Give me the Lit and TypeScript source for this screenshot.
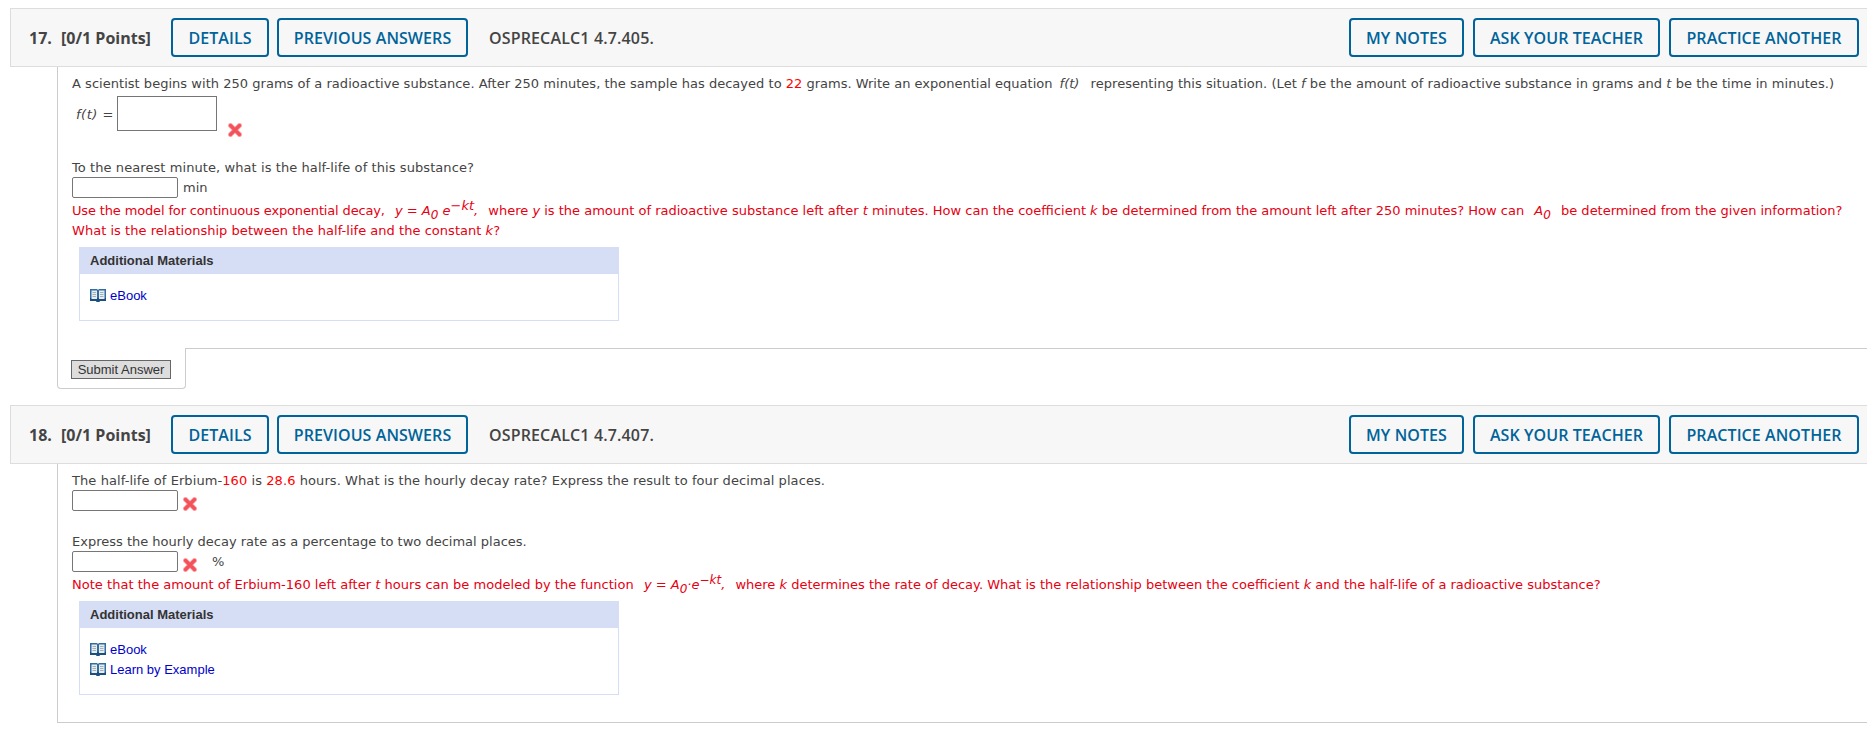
import { LitElement, css, html } from "lit";
import { customElement } from "lit/decorators.js";

const cross = html`<svg class="cross" viewBox="0 0 14 14" aria-hidden="true">
  <path d="M2.5 2.5 11.5 11.5M11.5 2.5 2.5 11.5" stroke="#fbb4b6" stroke-width="5.200" stroke-linecap="round" fill="none" />
  <path d="M2.5 2.5 11.5 11.5M11.5 2.5 2.5 11.5" stroke="#f4525a" stroke-width="3.400" stroke-linecap="round" fill="none" />
</svg>`;

const book = html`<svg class="book" viewBox="0 0 16 14" aria-hidden="true">
  <path d="M0 1h7l1 1 1-1h7v12h-6l-1 1H7l-1-1H0z" fill="#2f6da3" />
  <path d="M0 10h16v3h-6l-1 1H7l-1-1H0z" fill="#1b4f80" />
  <path d="M1.500 2.500H7v8.500H1.500zM9 2.500h5.500v8.500H9z" fill="#e9edf0" />
  <path d="M2.500 4.500h3.500M2.500 6.500h3.500M2.500 8.500h3.500M10 4.500h3.500M10 6.500h3.500M10 8.500h3.500" stroke="#9fb0bd" stroke-width="1" />
</svg>`;

@customElement("app-root")
export class AppRoot extends LitElement {
  static styles = css`
    :host {
      display: block;
      height: 740px;
      overflow: hidden;
      background: #fff;
      color: #444;
      font-family: "DejaVu Sans", Verdana, sans-serif;
      font-size: 13px;
      padding-top: 8px;
      box-sizing: border-box;
    }
    .head {
      display: flex;
      align-items: center;
      height: 59px;
      box-sizing: border-box;
      margin-left: 10px;
      padding: 0 8px 0 18px;
      background: #f7f7f7;
      border: 1px solid #ddd;
      border-right: none;
      font-family: "Open Sans", sans-serif;
      font-weight: 600;
      font-size: 16px;
    }
    .num {
      width: 32px;
      font-weight: 700;
    }
    .points {
      width: 110px;
      font-weight: 700;
    }
    .btn {
      display: flex;
      align-items: center;
      justify-content: center;
      box-sizing: border-box;
      height: 39px;
      border: 2px solid #00639a;
      border-radius: 4px;
      color: #00639a;
      letter-spacing: 0.08px;
    }
    .details {
      width: 98px;
      margin-right: 8px;
    }
    .previous {
      width: 191px;
    }
    .code {
      margin-left: 21px;
      flex: 1;
      letter-spacing: 0.15px;
    }
    .notes {
      width: 115px;
      margin-right: 9px;
    }
    .ask {
      width: 187px;
      margin-right: 9px;
    }
    .practice {
      width: 190px;
    }
    .body {
      box-sizing: border-box;
      margin-left: 57px;
      padding-left: 14px;
      border-left: 1px solid #ccc;
    }
    .first {
      height: 281px;
      padding-top: 6px;
    }
    .second {
      height: 259px;
      padding-top: 5px;
      border-bottom: 1px solid #ccc;
    }
    .line {
      height: 21px;
      line-height: 21px;
      white-space: nowrap;
    }
    .low {
      line-height: 23px;
    }
    .row {
      display: flex;
      align-items: flex-start;
    }
    .fx {
      padding-top: 2px;
      height: 53px;
      box-sizing: border-box;
    }
    .fx-label {
      width: 45px;
      padding-left: 4px;
      box-sizing: border-box;
      line-height: 37px;
      letter-spacing: 0.5px;
    }
    .tall {
      width: 100px;
      height: 35px;
      box-sizing: border-box;
      border: 1px solid #767676;
    }
    .wide {
      width: 106px;
      height: 21px;
      box-sizing: border-box;
      border: 1px solid #767676;
      border-radius: 2px;
      background: #fff;
    }
    .cross {
      width: 14px;
      height: 14px;
      flex: none;
    }
    .fx .cross {
      margin: 27px 0 0 11px;
    }
    .answer .cross {
      margin: 7px 0 0 5px;
    }
    .unit {
      line-height: 21px;
      margin-left: 5px;
    }
    .pct {
      margin-left: 15px;
    }
    .gap {
      margin-top: 10px;
      height: 20px;
      line-height: 22px;
    }
    .wide-gap {
      margin-top: 20px;
    }
    .red {
      color: #f00;
    }
    .hint {
      color: #e60012;
      margin-top: 1px;
    }
    .hint + .hint {
      margin-top: 0;
    }
    .note {
      margin-bottom: 7px;
    }
    i {
      font-style: italic;
    }
    .math {
      margin: 0 6px;
    }
    .fn {
      margin: 0 7px 0 3px;
    }
    .tight {
      letter-spacing: -0.15px;
    }
    .loose {
      letter-spacing: 0.08px;
    }
    .slight {
      letter-spacing: 0.03px;
    }
    .tail {
      letter-spacing: 0.05px;
    }
    sub {
      font-size: 12px;
      line-height: 0;
    }
    sup {
      font-size: 13px;
      line-height: 0;
    }
    .note sup {
      font-size: 12px;
    }
    .materials {
      width: 540px;
      box-sizing: border-box;
      margin: 6px 0 0 7px;
      border: 1px solid #d6def6;
      font-family: "Liberation Sans", Arial, sans-serif;
      font-size: 13px;
    }
    .materials h3 {
      margin: 0;
      height: 26px;
      line-height: 26px;
      padding-left: 10px;
      background: #d6def6;
      font-size: 13px;
      font-weight: 700;
      color: #333;
    }
    .links {
      padding: 11px 10px 15px;
    }
    .link {
      display: flex;
      align-items: center;
      height: 20px;
      color: #0000cc;
    }
    .book {
      width: 16px;
      height: 14px;
      margin-right: 4px;
    }
    .foot {
      display: flex;
      height: 41px;
    }
    .tab {
      width: 129px;
      box-sizing: border-box;
      margin-left: 57px;
      padding: 12px 0 0 13px;
      border: 1px solid #ccc;
      border-top: none;
      border-radius: 0 0 4px 4px;
      flex: none;
    }
    .rest {
      flex: 1;
      border-top: 1px solid #ccc;
    }
    .submit {
      display: block;
      width: 100px;
      height: 19px;
      padding: 0;
      box-sizing: border-box;
      background: #ddd;
      border: 1px solid #666;
      color: #333;
      font: 13px/17px "Liberation Sans", Arial, sans-serif;
    }
    .spacer {
      height: 16px;
    }
  `;

  private header(num: string, code: string) {
    return html`<div class="head">
      <span class="num">${num}</span>
      <span class="points">[0/1 Points]</span>
      <span class="btn details">DETAILS</span>
      <span class="btn previous">PREVIOUS ANSWERS</span>
      <span class="code">${code}</span>
      <span class="btn notes">MY NOTES</span>
      <span class="btn ask">ASK YOUR TEACHER</span>
      <span class="btn practice">PRACTICE ANOTHER</span>
    </div>`;
  }

  render() {
    return html`
      ${this.header("17.", "OSPRECALC1 4.7.405.")}
      <div class="body first">
        <div class="line">
          <span class="slight"
            >A scientist begins with 250 grams of a radioactive substance. After 250 minutes, the sample has decayed
            to</span
          >
          <span class="red">22</span> grams. Write an exponential equation <i class="fn">f(t)</i>
          <span class="tail"
            >representing this situation. (Let <i>f</i> be the amount of radioactive substance in grams and <i>t</i> be
            the time in minutes.)</span
          >
        </div>
        <div class="row fx">
          <span class="fx-label"><i>f(t)</i> =</span>
          <div class="tall"></div>
          ${cross}
        </div>
        <div class="line gap loose">To the nearest minute, what is the half-life of this substance?</div>
        <div class="row answer"><div class="wide"></div><span class="unit">min</span></div>
        <div class="line hint low">
          <span class="tight">Use the model for continuous exponential decay,</span>
          <i class="math">y = A<sub>0</sub> e<sup>−kt</sup>,</i> where <i>y</i> is the amount of radioactive substance
          left after <i>t</i> minutes. How can the coefficient <i>k</i> be determined from the amount left after 250
          minutes? How can <i class="math">A<sub>0</sub></i> be determined from the given information?
        </div>
        <div class="line hint slight">What is the relationship between the half-life and the constant <i>k</i>?</div>
        <div class="materials">
          <h3>Additional Materials</h3>
          <div class="links">
            <div class="link">${book}eBook</div>
          </div>
        </div>
      </div>
      <div class="foot">
        <div class="tab"><button class="submit">Submit Answer</button></div>
        <div class="rest"></div>
      </div>
      <div class="spacer"></div>
      ${this.header("18.", "OSPRECALC1 4.7.407.")}
      <div class="body second">
        <div class="line low loose">
          The half-life of Erbium-<span class="red">160</span> is <span class="red">28.6</span> hours. What is the
          hourly decay rate? Express the result to four decimal places.
        </div>
        <div class="row answer"><div class="wide"></div>${cross}</div>
        <div class="line gap wide-gap">Express the hourly decay rate as a percentage to two decimal places.</div>
        <div class="row answer"><div class="wide"></div>${cross}<span class="unit pct">%</span></div>
        <div class="line hint note low">
          <span class="slight">Note that the amount of Erbium-160 left after <i>t</i> hours can be modeled by the function</span>
          <i class="math">y = A<sub>0</sub>·e<sup>−kt</sup>,</i> where <i>k</i> determines the rate of decay. What is
          the relationship between the coefficient <i>k</i> and the half-life of a radioactive substance?
        </div>
        <div class="materials">
          <h3>Additional Materials</h3>
          <div class="links">
            <div class="link">${book}eBook</div>
            <div class="link">${book}Learn by Example</div>
          </div>
        </div>
      </div>
    `;
  }
}
